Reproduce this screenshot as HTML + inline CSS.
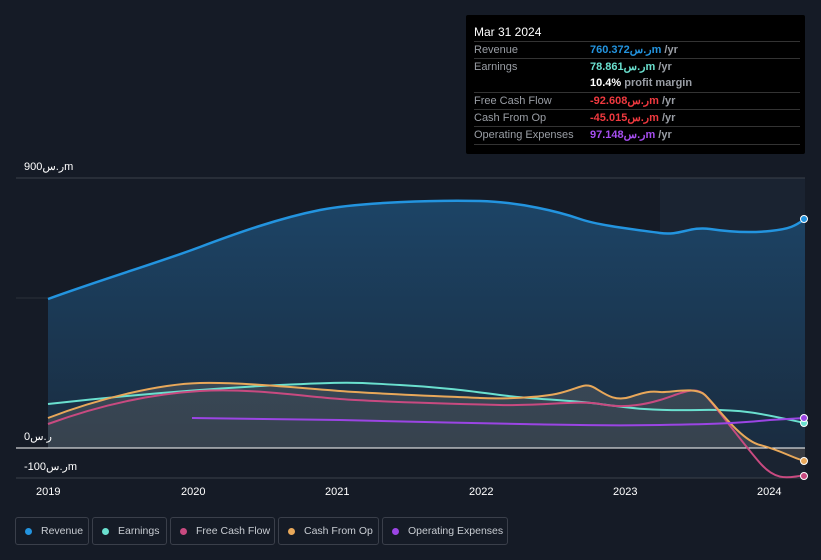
<!DOCTYPE html>
<html><head><style>
html,body{margin:0;width:821px;height:560px;overflow:hidden}
body{background:#151b26;font-family:"Liberation Sans","Noto Sans CJK SC",sans-serif;position:relative}
.tt{position:absolute;left:466px;top:15px;width:339px;height:139px;background:#000;border-radius:2px;font-size:11px;color:#9a9ea5}
.tt .h{color:#fff;font-size:12px;position:absolute;left:8px;top:10px}
.row{position:absolute;left:8px;width:326px;height:17px;border-top:1px solid #333;line-height:17px}
.row span{position:absolute;left:116px;font-weight:bold}
.lg{position:absolute;top:517px;height:28px;border:1px solid #3a3f4a;border-radius:3px;color:#c8ccd2;font-size:10.5px;line-height:26px;box-sizing:border-box;padding-left:25px;white-space:nowrap}
.lg i{position:absolute;left:9px;top:10px;width:7px;height:7px;border-radius:50%}
.ax{position:absolute;color:#fff;font-size:11px}
</style></head><body>
<svg width="821" height="560" style="position:absolute;left:0;top:0">
<defs><linearGradient id="g" x1="0" y1="0" x2="0" y2="1"><stop offset="0" stop-color="#1c4466"/><stop offset="1" stop-color="#1a2c40"/></linearGradient></defs>
<rect x="660" y="178" width="145" height="300" fill="#1a2331"/>
<line x1="16" y1="178" x2="805" y2="178" stroke="#3a404a"/>
<line x1="16" y1="298" x2="805" y2="298" stroke="#2a303a"/>
<path d="M48,299 C100,280 160,262 200,247 S280,218 320,210 S440,200 480,201 S560,212 580,219 S640,230 660,233 S690,226 710,229 S750,233 770,231 S795,226 805,219 L805,448 L48,448Z" fill="url(#g)"/>
<path d="M48,418 C100,398 160,384 200,383 S300,388 340,391 S460,397 480,398 S540,398 560,393 S585,382 595,388 S615,402 630,397 S650,391 660,392 S695,386 705,395 S740,440 760,445 S795,459 805,461 L805,448 L48,448Z" fill="#a09080" opacity=".22"/>
<path d="M48,299 C100,280 160,262 200,247 S280,218 320,210 S440,200 480,201 S560,212 580,219 S640,230 660,233 S690,226 710,229 S750,233 770,231 S795,226 805,219" fill="none" stroke="#2394df" stroke-width="2.5"/>
<line x1="16" y1="448" x2="805" y2="448" stroke="#fff" stroke-width="1"/>
<line x1="16" y1="478" x2="805" y2="478" stroke="#3a404a"/>
<path d="M48,404 C120,396 200,389 280,385 S360,383 400,385 S470,391 500,395 S570,400 600,404 S650,411 700,410 S770,416 805,423" fill="none" stroke="#6ae0cf" stroke-width="2"/>
<path d="M48,424 C100,405 150,394 200,391 S300,396 340,399 S460,404 500,405 S580,400 600,404 S640,406 660,400 S695,385 705,395 S740,440 760,463 S795,474 805,476" fill="none" stroke="#c84a80" stroke-width="2"/>
<path d="M48,418 C100,398 160,384 200,383 S300,388 340,391 S460,397 480,398 S540,398 560,393 S585,382 595,388 S615,402 630,397 S650,391 660,392 S695,386 705,395 S740,440 760,445 S795,459 805,461" fill="none" stroke="#e8a85a" stroke-width="2"/>
<path d="M192,418 L340,420 S460,423 520,424 S600,426 660,425 S740,423 770,420 L805,418" fill="none" stroke="#9b45e4" stroke-width="2"/>
<circle cx="804" cy="219" r="3.5" fill="#2394df" stroke="#fff"/>
<circle cx="804" cy="423" r="3.5" fill="#6ae0cf" stroke="#fff"/>
<circle cx="804" cy="476" r="3.5" fill="#c84a80" stroke="#fff"/>
<circle cx="804" cy="461" r="3.5" fill="#e8a85a" stroke="#fff"/>
<circle cx="804" cy="418" r="3.5" fill="#9b45e4" stroke="#fff"/>
</svg>
<div class="ax" style="left:24px;top:160px">900ر.سm</div>
<div class="ax" style="left:24px;top:430px">0ر.س</div>
<div class="ax" style="left:24px;top:460px">-100ر.سm</div>
<div class="ax" style="left:36px;top:486px">2019</div>
<div class="ax" style="left:181px;top:486px">2020</div>
<div class="ax" style="left:325px;top:486px">2021</div>
<div class="ax" style="left:469px;top:486px">2022</div>
<div class="ax" style="left:613px;top:486px">2023</div>
<div class="ax" style="left:757px;top:486px">2024</div>
<div class="tt"><div class="h">Mar 31 2024</div>
<div class="row" style="top:26px">Revenue<span style="color:#2394df">760.372ر.سm <b style="color:#9a9ea5">/yr</b></span></div>
<div class="row" style="top:43px">Earnings<span style="color:#6ae0cf">78.861ر.سm <b style="color:#9a9ea5">/yr</b></span></div>
<div class="row" style="top:60px;border:0"><span style="color:#fff">10.4% <b style="color:#9a9ea5">profit margin</b></span></div>
<div class="row" style="top:77px">Free Cash Flow<span style="color:#f0393f">-92.608ر.سm <b style="color:#9a9ea5">/yr</b></span></div>
<div class="row" style="top:94px">Cash From Op<span style="color:#f0393f">-45.015ر.سm <b style="color:#9a9ea5">/yr</b></span></div>
<div class="row" style="top:111px">Operating Expenses<span style="color:#a64ef0">97.148ر.سm <b style="color:#9a9ea5">/yr</b></span></div>
<div class="row" style="top:129px;height:0"></div>
</div>
<div class="lg" style="left:15px;width:74px"><i style="background:#2394df"></i>Revenue</div>
<div class="lg" style="left:92px;width:75px"><i style="background:#6ae0cf"></i>Earnings</div>
<div class="lg" style="left:170px;width:105px"><i style="background:#c84a80"></i>Free Cash Flow</div>
<div class="lg" style="left:278px;width:101px"><i style="background:#e8a85a"></i>Cash From Op</div>
<div class="lg" style="left:382px;width:126px"><i style="background:#9b45e4"></i>Operating Expenses</div>
</body></html>
